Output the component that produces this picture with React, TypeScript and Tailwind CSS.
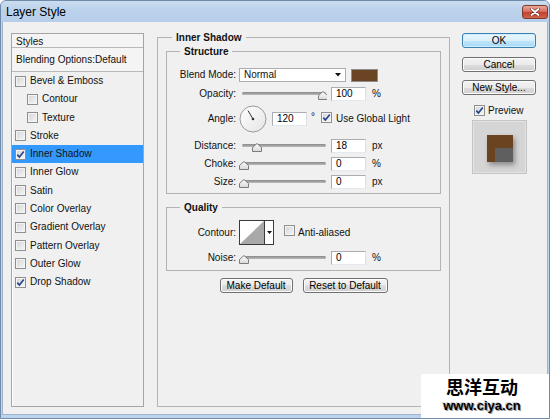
import React from "react";

const Check = ({ checked = false }: { checked?: boolean }) => (
  <span className="inline-flex w-[11px] h-[11px] shrink-0 border border-[#8e8f8f] bg-[linear-gradient(135deg,#d2d4d8_0%,#f6f6f6_100%)] shadow-[inset_0_0_0_1px_#f4f4f4] items-center justify-center">
    {checked && (
      <svg width="9" height="9" viewBox="0 0 9 9">
        <path d="M1.3 4.6 L3.4 7 L7.8 1.6" fill="none" stroke="#23418a" strokeWidth="1.6" />
      </svg>
    )}
  </span>
);

const Slider = ({ pos }: { pos: number }) => (
  <svg width="88" height="14" viewBox="0 0 88 14" className="shrink-0">
    <defs>
      <linearGradient id={`tr${pos}`} x1="0" y1="0" x2="0" y2="1">
        <stop offset="0" stopColor="#8a8a8a" />
        <stop offset="1" stopColor="#b9b9b9" />
      </linearGradient>
      <linearGradient id={`th${pos}`} x1="0" y1="0" x2="0" y2="1">
        <stop offset="0" stopColor="#ffffff" />
        <stop offset="1" stopColor="#d8d8d8" />
      </linearGradient>
    </defs>
    <rect x="3" y="5" width="84" height="3" rx="1.5" fill={`url(#tr${pos})`} />
    <polygon
      points={`${pos},4.5 ${pos + 4.5},8.5 ${pos + 4.5},12.5 ${pos - 4.5},12.5 ${pos - 4.5},8.5`}
      fill={`url(#th${pos})`}
      stroke="#6f6f6f"
      strokeWidth="0.9"
    />
  </svg>
);

const Input = ({ value }: { value: string }) => (
  <div className="w-[35px] h-[14px] shrink-0 bg-white border border-[#abadb3] border-b-[#e3e9ef] border-r-[#dbdfe6] flex items-center pl-[4px] text-black leading-none">
    {value}
  </div>
);

const Label = ({ children }: { children: React.ReactNode }) => (
  <div className="w-[69px] text-right shrink-0 leading-none">{children}</div>
);

const SliderRow = ({ label, pos, value, unit, className = "" }: { label: string; pos: number; value: string; unit: string; className?: string }) => (
  <div className={`flex items-center h-[14px] ${className}`}>
    <Label>{label}</Label>
    <div className="ml-[3px]">
      <Slider pos={pos} />
    </div>
    <div className="ml-[4px]">
      <Input value={value} />
    </div>
    <div className="ml-[6px] leading-none">{unit}</div>
  </div>
);

const Btn = ({ children, w, primary = false, className = "" }: { children: React.ReactNode; w: string; primary?: boolean; className?: string }) => (
  <div
    className={`${w} h-[15px] rounded-[3px] border flex items-center justify-center leading-none text-black ${
      primary
        ? "border-[#3c7fb1] bg-[linear-gradient(#eaf6fd_0%,#d9f0fc_50%,#bee6fd_50%,#a7d9f5_100%)] shadow-[inset_0_0_0_1px_#cdeefc]"
        : "border-[#707070] bg-[linear-gradient(#f2f2f2_0%,#ebebeb_50%,#dddddd_50%,#cfcfcf_100%)] shadow-[inset_0_0_0_1px_#fcfcfc]"
    } ${className}`}
  >
    {children}
  </div>
);

const items: { name: string; sub?: boolean; checked?: boolean; active?: boolean }[] = [
  { name: "Bevel & Emboss" },
  { name: "Contour", sub: true },
  { name: "Texture", sub: true },
  { name: "Stroke" },
  { name: "Inner Shadow", checked: true, active: true },
  { name: "Inner Glow" },
  { name: "Satin" },
  { name: "Color Overlay" },
  { name: "Gradient Overlay" },
  { name: "Pattern Overlay" },
  { name: "Outer Glow" },
  { name: "Drop Shadow", checked: true },
];

export default function App() {
  return (
    <div className="w-[550px] h-[419px] relative overflow-hidden bg-[#bcd3ec] border border-[#6f8bab] rounded-t-[6px] flex flex-col font-['Liberation_Sans',Arial,sans-serif] text-[10px] text-[#111]">
      {/* Title bar */}
      <div className="h-[21px] shrink-0 flex items-center pl-[5px] bg-[linear-gradient(#cbdcef_0%,#bcd3ec_40%,#b6cee9_100%)]">
        <span className="text-[12px] text-black font-['Liberation_Sans',Arial,sans-serif]">Layer Style</span>
        <div className="ml-auto mr-[1px] mt-[1px] w-[26px] h-[14px] rounded-[3px] border border-[#7d3a30] bg-[linear-gradient(#e9a99b_0%,#d7705f_45%,#c3412d_55%,#d2624c_100%)] flex items-center justify-center">
          <svg width="10" height="8" viewBox="0 0 10 8">
            <path d="M1.5 1 L8.5 7 M8.5 1 L1.5 7" stroke="#6b2a20" strokeWidth="3" strokeLinecap="round" />
            <path d="M1.5 1 L8.5 7 M8.5 1 L1.5 7" stroke="#ffffff" strokeWidth="1.8" strokeLinecap="round" />
          </svg>
        </div>
      </div>

      {/* Body */}
      <div className="flex-1 mx-[1px] mb-[3px] bg-[#f0f0f0] border border-[#9fb4cc] border-t-0 flex items-start pt-[9px] pl-[8px]">
        {/* Left list */}
        <div className="mt-[2px] w-[133px] h-[374px] border border-[#a5a5a5] shadow-[inset_1px_1px_0_#ffffff] flex flex-col shrink-0">
          <div className="h-[14px] flex items-center pl-[4px] pt-[1px] border-b border-[#b8b8b8] bg-[#f4f4f4]">Styles</div>
          <div className="h-[24px] flex items-center pl-[4px] border-b border-[#b8b8b8] bg-[#f4f4f4]">Blending Options:Default</div>
          {items.map((it) => (
            <div
              key={it.name}
              className={`h-[18.27px] flex items-center ${it.sub ? "pl-[15px]" : "pl-[3px]"} ${it.active ? "bg-[#3399ff]" : ""}`}
            >
              <Check checked={it.checked} />
              <span className="ml-[4px] leading-none">{it.name}</span>
            </div>
          ))}
        </div>

        {/* Main group */}
        <fieldset className="ml-[13px] w-[293px] h-[376px] border border-[#b3b3b3] px-[8px] shrink-0">
          <legend className="ml-[6px] px-[4px] font-bold leading-[13px]">Inner Shadow</legend>

          {/* Structure */}
          <fieldset className="mt-[1px] border border-[#b3b3b3] pb-[4px] pt-[10px]">
            <legend className="ml-[13px] px-[4px] font-bold leading-[13px]">Structure</legend>
            <div className="flex items-center h-[14px]">
              <Label>Blend Mode:</Label>
              <div className="ml-[3px] w-[107px] h-[14px] bg-white border border-[#abadb3] flex items-center pl-[4px] pr-[4px] leading-none">
                <span>Normal</span>
                <svg className="ml-auto" width="6" height="4" viewBox="0 0 6 4">
                  <polygon points="0,0 6,0 3,3.5" fill="#111" />
                </svg>
              </div>
              <div className="ml-[5px] w-[27px] h-[13px] bg-[#6b4523] border border-[#8d8d8d]" />
            </div>
            <SliderRow className="mt-[5px]" label="Opacity:" pos={84} value="100" unit="%" />
            <div className="flex items-center h-[27px] mt-[4px]">
              <Label>Angle:</Label>
              <svg className="ml-[3px] shrink-0" width="28" height="28" viewBox="0 0 28 28">
                <defs>
                  <linearGradient id="dial" x1="0" y1="0" x2="1" y2="1">
                    <stop offset="0" stopColor="#ffffff" />
                    <stop offset="1" stopColor="#e4e4e4" />
                  </linearGradient>
                </defs>
                <circle cx="14" cy="14" r="13" fill="url(#dial)" stroke="#9b9b9b" strokeWidth="1" />
                <line x1="14" y1="14" x2="9" y2="5.6" stroke="#333" strokeWidth="1" />
                <circle cx="14" cy="14" r="1.3" fill="#333" />
              </svg>
              <div className="ml-[5px]">
                <Input value="120" />
              </div>
              <div className="ml-[4px] self-start mt-[7px] leading-none">°</div>
              <div className="ml-[6px]">
                <Check checked />
              </div>
              <span className="ml-[4px] leading-none whitespace-nowrap">Use Global Light</span>
            </div>
            <SliderRow className="mt-[7px]" label="Distance:" pos={18} value="18" unit="px" />
            <SliderRow className="mt-[4px]" label="Choke:" pos={5} value="0" unit="%" />
            <SliderRow className="mt-[4px]" label="Size:" pos={5} value="0" unit="px" />
          </fieldset>

          {/* Quality */}
          <fieldset className="mt-[7px] border border-[#b3b3b3] pt-[6px] pb-[5px]">
            <legend className="ml-[13px] px-[4px] font-bold leading-[13px]">Quality</legend>
            <div className="flex items-center h-[25px]">
              <Label>Contour:</Label>
              <div className="ml-[3px] w-[35px] h-[25px] border border-[#3a3a3a] flex shrink-0">
                <div className="w-[24px] h-full bg-white">
                  <svg width="24" height="23" viewBox="0 0 24 23">
                    <polygon points="0,23 24,0 24,23" fill="#a9a9a9" />
                  </svg>
                </div>
                <div className="flex-1 border-l border-[#3a3a3a] bg-white flex items-center justify-center">
                  <svg width="5" height="3" viewBox="0 0 5 3">
                    <polygon points="0,0 5,0 2.5,3" fill="#111" />
                  </svg>
                </div>
              </div>
              <div className="ml-[10px]">
                <Check />
              </div>
              <span className="ml-[3px] leading-none">Anti-aliased</span>
            </div>
            <SliderRow className="mt-[6px]" label="Noise:" pos={5} value="0" unit="%" />
          </fieldset>

          <div className="flex justify-center gap-[10px] mt-[7px]">
            <Btn w="w-[73px]">Make Default</Btn>
            <Btn w="w-[85px]">Reset to Default</Btn>
          </div>
        </fieldset>

        {/* Right column */}
        <div className="ml-[12px] mt-[2px] w-[74px] flex flex-col shrink-0">
          <Btn w="w-[74px]" primary>OK</Btn>
          <Btn w="w-[74px]" className="mt-[9px]">Cancel</Btn>
          <Btn w="w-[74px]" className="mt-[8px]">New Style...</Btn>
          <div className="flex items-center mt-[10px] ml-[12px]">
            <Check checked />
            <span className="ml-[3px] leading-none">Preview</span>
          </div>
          <div className="mt-[4px] ml-[10px] w-[55px] h-[54px] bg-[#d5d5d5] border border-[#c4c4c4] shadow-[inset_0_0_0_1px_#e2e2e2] flex items-center justify-center">
            <div className="mt-[2px] w-[26px] h-[27px] bg-[#6b4321] shadow-[2px_3px_5px_rgba(0,0,0,0.35)] flex items-end justify-end">
              <div className="w-[18px] h-[14px] bg-[#5f5f5f]" />
            </div>
          </div>
        </div>
      </div>

      {/* Watermark */}
      <div className="absolute right-0 bottom-0 w-[128px] h-[44px] bg-white flex flex-col items-center pr-[6px] pt-[2px]">
        <span className="text-[18px] leading-[21px] h-[21px] overflow-visible font-bold text-black font-['Noto_Sans_CJK_SC',sans-serif]">思洋互动</span>
        <span className="mt-[2px] text-[13px] leading-[13px] font-bold text-black font-['Liberation_Sans',Arial,sans-serif] [text-shadow:1px_1px_0_#9a9a9a,-1px_-1px_0_#d0d0d0]">www.ciya.cn</span>
      </div>
    </div>
  );
}
